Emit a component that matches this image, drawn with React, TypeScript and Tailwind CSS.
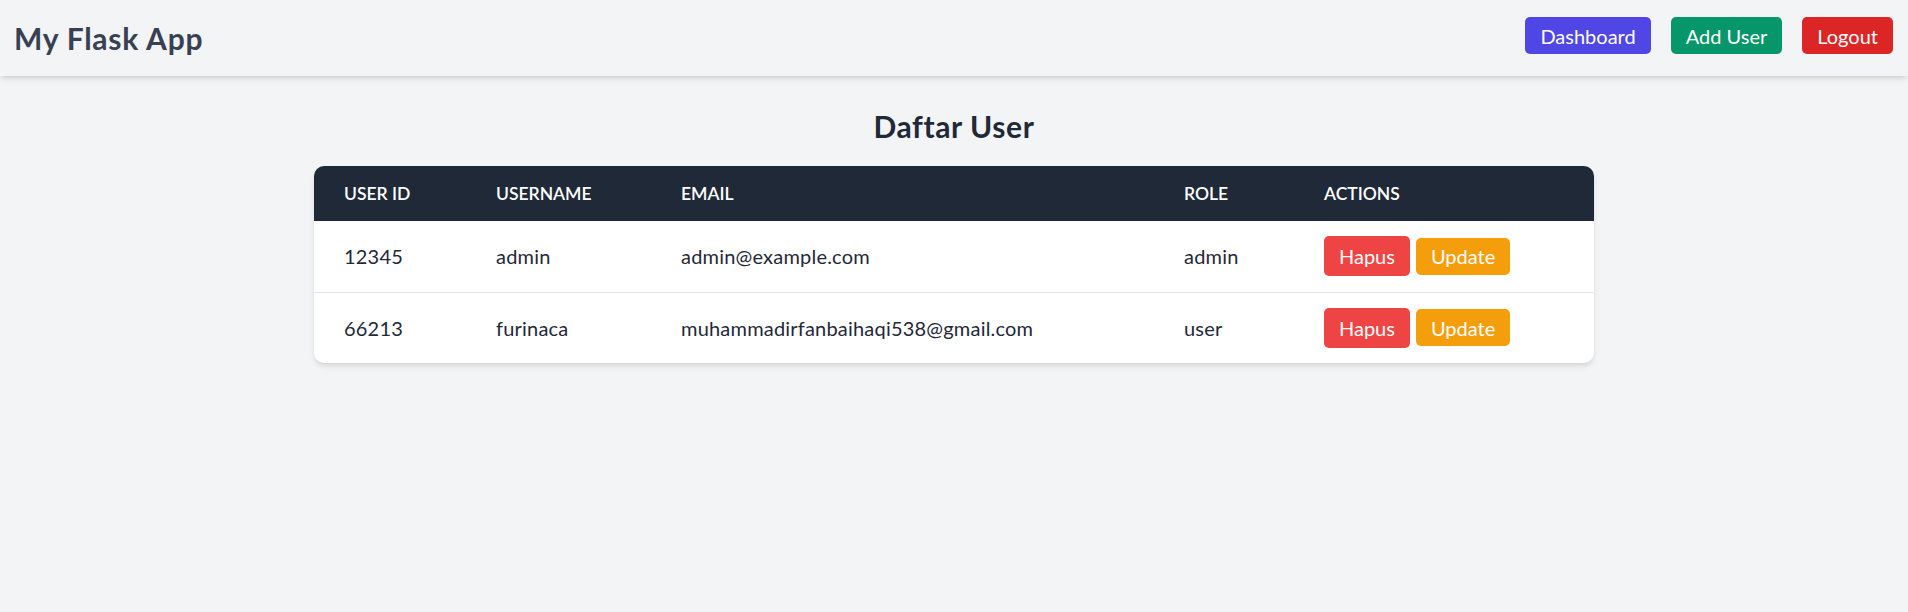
import React from 'react';

interface User {
  id: string;
  username: string;
  email: string;
  role: string;
}

const users: User[] = [
  { id: '12345', username: 'admin', email: 'admin@example.com', role: 'admin' },
  { id: '66213', username: 'furinaca', email: 'muhammadirfanbaihaqi538@gmail.com', role: 'user' },
];

export default function App() {
  return (
    <div className="min-h-[612px] bg-[#f3f4f6] font-['Segoe_UI',Lato,sans-serif] text-[#1f2937]">
      {/* Navbar */}
      <nav className="h-[76px] flex items-center justify-between pl-[14px] pr-[15px] bg-[#f3f4f6] shadow-md">
        <h1 className="text-[30px] font-bold tracking-[0.75px] text-[#374151]">My Flask App</h1>
        <div className="flex items-center gap-[20px] -mt-[5px]">
          <a className="h-[37px] px-[15px] flex items-center rounded-[5px] bg-[#4f46e5] text-white text-[20px]">Dashboard</a>
          <a className="h-[37px] px-[15px] flex items-center rounded-[5px] bg-[#059669] text-white text-[20px]">Add User</a>
          <a className="h-[37px] px-[15px] flex items-center rounded-[5px] bg-[#dc2626] text-white text-[20px]">Logout</a>
        </div>
      </nav>

      {/* Content */}
      <main className="pt-[30px] flex flex-col items-center">
        <h2 className="text-[30px] leading-[40px] font-bold tracking-[0.6px] text-[#1f2937] mb-[20px]">Daftar User</h2>
        <div className="w-[1280px] bg-white rounded-[10px] shadow-md overflow-hidden">
          <table className="w-full table-fixed text-left">
            <thead className="bg-[#1f2937] text-white">
              <tr className="h-[55px]">
                <th className="w-[152px] px-[30px] text-[17.5px] leading-[25px] font-semibold uppercase">User ID</th>
                <th className="w-[185px] px-[30px] text-[17.5px] leading-[25px] font-semibold uppercase">Username</th>
                <th className="w-[503px] px-[30px] text-[17.5px] leading-[25px] font-semibold uppercase">Email</th>
                <th className="w-[140px] px-[30px] text-[17.5px] leading-[25px] font-semibold uppercase">Role</th>
                <th className="px-[30px] text-[17.5px] leading-[25px] font-semibold uppercase">Actions</th>
              </tr>
            </thead>
            <tbody>
              {users.map((u, i) => (
                <tr key={u.id} className={i > 0 ? 'border-t border-[#e5e7eb]' : ''}>
                  <td className="px-[30px] h-[71px] text-[20px] tracking-[0.2px] align-middle">{u.id}</td>
                  <td className="px-[30px] h-[71px] text-[20px] tracking-[0.2px] align-middle">{u.username}</td>
                  <td className="px-[30px] h-[71px] text-[20px] tracking-[0.2px] align-middle">{u.email}</td>
                  <td className="px-[30px] h-[71px] text-[20px] tracking-[0.2px] align-middle">{u.role}</td>
                  <td className="px-[30px] h-[71px] align-middle">
                    <div className="flex items-center gap-[6px]">
                      <button className="h-[40px] px-[15px] rounded-[5px] bg-[#ef4444] text-white text-[20px]">Hapus</button>
                      <a className="h-[37px] px-[15px] flex items-center rounded-[5px] bg-[#f59e0b] text-white text-[20px]">Update</a>
                    </div>
                  </td>
                </tr>
              ))}
            </tbody>
          </table>
        </div>
      </main>
    </div>
  );
}
